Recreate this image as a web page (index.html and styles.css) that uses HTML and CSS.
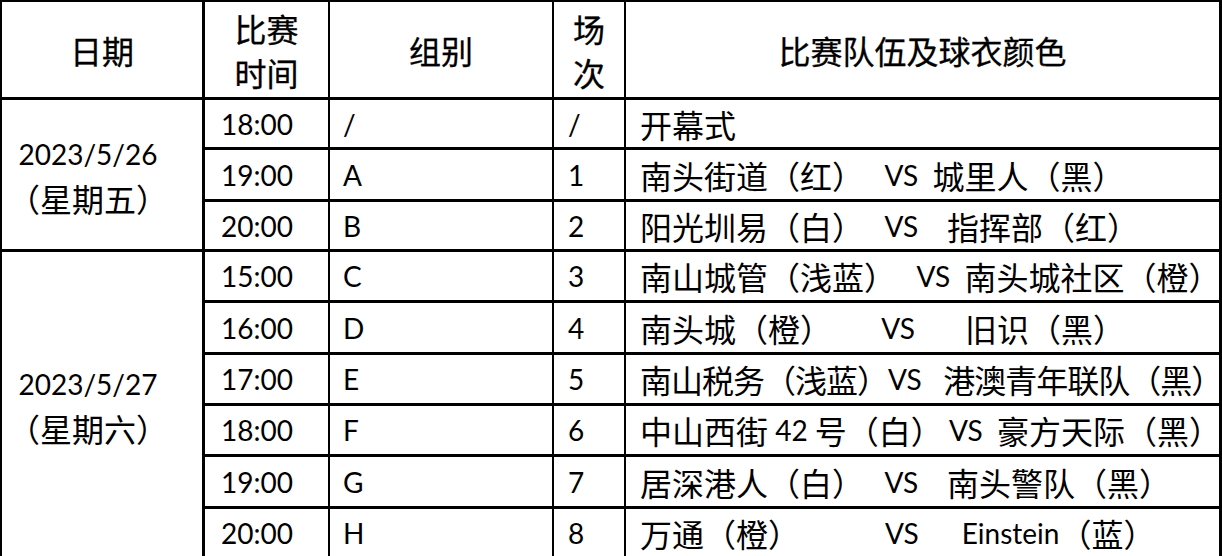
FILE: index.html
```html
<!DOCTYPE html>
<html lang="zh-CN">
<head>
<meta charset="utf-8">
<title>比赛安排</title>
<link rel="stylesheet" href="styles.css">
</head>
<body>
<div class="schedule">
  <div class="cell head c-date">日期</div>
  <div class="cell head c-time stack"><span>比赛</span><span>时间</span></div>
  <div class="cell head c-group">组别</div>
  <div class="cell head c-no stack"><span>场</span><span>次</span></div>
  <div class="cell head c-team">比赛队伍及球衣颜色</div>

  <div class="cell day day1"><span><span class="lat">2023/5/26</span></span><span>（星期五）</span></div>
  <div class="cell c-time lat">18:00</div>
  <div class="cell c-group lat">/</div>
  <div class="cell c-no lat">/</div>
  <div class="cell c-team">开幕式</div>

  <div class="cell c-time lat">19:00</div>
  <div class="cell c-group lat">A</div>
  <div class="cell c-no lat">1</div>
  <div class="cell c-team">南头街道（红）<span class="lat">   VS  </span>城里人（黑）</div>

  <div class="cell c-time lat">20:00</div>
  <div class="cell c-group lat">B</div>
  <div class="cell c-no lat">2</div>
  <div class="cell c-team">阳光圳易（白）<span class="lat">   VS    </span>指挥部（红）</div>

  <div class="cell day day2"><span><span class="lat">2023/5/27</span></span><span>（星期六）</span></div>
  <div class="cell c-time lat">15:00</div>
  <div class="cell c-group lat">C</div>
  <div class="cell c-no lat">3</div>
  <div class="cell c-team">南山城管（浅蓝）<span class="lat">   VS  </span>南头城社区（橙）</div>

  <div class="cell c-time lat">16:00</div>
  <div class="cell c-group lat">D</div>
  <div class="cell c-no lat">4</div>
  <div class="cell c-team">南头城（橙）<span class="lat">       VS       </span>旧识（黑）</div>

  <div class="cell c-time lat">17:00</div>
  <div class="cell c-group lat">E</div>
  <div class="cell c-no lat">5</div>
  <div class="cell c-team tight">南山税务（浅蓝）<span class="lat">VS   </span>港澳青年联队（黑）</div>

  <div class="cell c-time lat">18:00</div>
  <div class="cell c-group lat">F</div>
  <div class="cell c-no lat">6</div>
  <div class="cell c-team">中山西街<span class="lat"> 42 </span>号（白）<span class="lat"> VS  </span>豪方天际（黑）</div>

  <div class="cell c-time lat">19:00</div>
  <div class="cell c-group lat">G</div>
  <div class="cell c-no lat">7</div>
  <div class="cell c-team">居深港人（白）<span class="lat">   VS    </span>南头警队（黑）</div>

  <div class="cell c-time lat">20:00</div>
  <div class="cell c-group lat">H</div>
  <div class="cell c-no lat">8</div>
  <div class="cell c-team">万通（橙）<span class="lat">            VS      Einstein</span>（蓝）</div>
</div>
</body>
</html>
```

FILE: styles.css
```css
html, body {
  margin: 0;
  padding: 0;
  overflow: hidden;
  background: #fff;
}

.schedule {
  display: grid;
  grid-template-columns: 203px 125px 224px 72px 596px;
  grid-template-rows: 98px 50px 52px 50px 51px 52px 51px 51px 52px 51px;
  width: 1222px;
  box-sizing: border-box;
  border-left: 2px solid #000;
  border-top: 2px solid #000;
  font-family: "Noto Sans CJK SC", sans-serif;
  font-size: 32px;
  color: #000;
}

.cell {
  box-sizing: border-box;
  border-bottom: 3px solid #000;
  border-right: 2px solid #000;
  display: flex;
  align-items: center;
  white-space: pre;
  overflow: hidden;
  line-height: 44px;
}

.lat {
  font-family: Lato, "Liberation Sans", sans-serif;
  font-size: 28px;
}

.head {
  justify-content: center;
  text-align: center;
  -webkit-text-stroke: 0.3px #000;
}

.stack {
  flex-direction: column;
  justify-content: center;
}

.c-date, .day {
  border-right-width: 3px;
}

.c-team {
  border-right-width: 3px;
  padding-left: 14px;
}

.head.c-team {
  padding-left: 0;
}

.c-time {
  padding-left: 16px;
}

.c-group {
  padding-left: 13px;
}

.c-no {
  padding-left: 14px;
}

.head.c-time, .head.c-group, .head.c-no {
  padding-left: 0;
}

.day {
  grid-row: span 3;
  flex-direction: column;
  justify-content: center;
  padding-right: 28px;
}

.day2 {
  grid-row: span 6;
}

.tight {
  letter-spacing: -1px;
}

.tight .lat {
  letter-spacing: 0;
}
```
